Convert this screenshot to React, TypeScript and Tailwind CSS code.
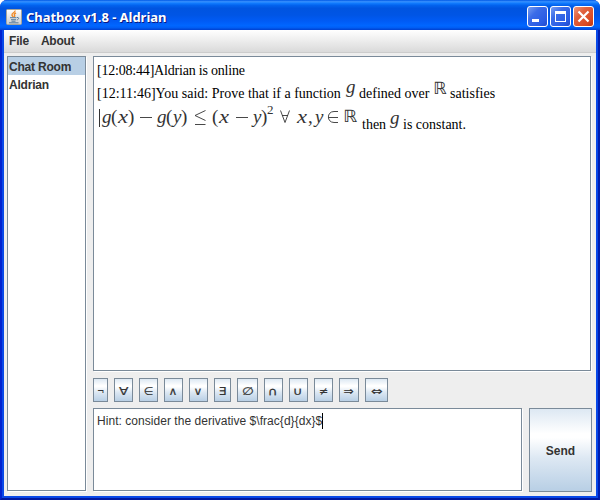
import React from "react";

const symbols = [
  { s: "¬", w: "w-[15px]", fit: "scale-x-75" },
  { s: "∀", w: "w-[19px]", fit: "scale-x-125" },
  { s: "∈", w: "w-[19px]", fit: "scale-x-100" },
  { s: "∧", w: "w-[19px]", fit: "scale-x-110" },
  { s: "∨", w: "w-[19px]", fit: "scale-x-110" },
  { s: "∃", w: "w-[17px]", fit: "scale-x-110" },
  { s: "∅", w: "w-[21px]", fit: "scale-x-125" },
  { s: "∩", w: "w-[19px]", fit: "scale-x-125" },
  { s: "∪", w: "w-[19px]", fit: "scale-x-125" },
  { s: "≠", w: "w-[19px]", fit: "scale-x-100" },
  { s: "⇒", w: "w-[20px]", fit: "scale-x-110" },
  { s: "⇔", w: "w-[23px]", fit: "scale-x-125" },
];

const metal =
  "border border-[#7a8a99] bg-[linear-gradient(to_bottom,#dde8f3_0%,#ffffff_30%,#ffffff_35%,#dde8f3_60%,#b8cfe5_100%)]";
const panel = "border border-[#7a8a99] bg-white shadow-[1px_1px_0_#ffffff]";

function JavaIcon() {
  return (
    <svg width="16" height="16" viewBox="0 0 16 16" className="block">
      <defs>
        <linearGradient id="cupbg" x1="0" y1="0" x2="0" y2="1">
          <stop offset="0" stopColor="#ffffff" />
          <stop offset="1" stopColor="#c9cccf" />
        </linearGradient>
      </defs>
      <rect x="0.5" y="0.5" width="15" height="15" rx="1" fill="url(#cupbg)" stroke="#a5a49b" />
      <path d="M9 1.5C9.5 3.5 5.5 4 6 6C6.2 7 7 7.3 7 8M10 4C8 5 8 5.500 8.700 6.500C9 7.200 8.500 7.600 8 8" fill="none" stroke="#f08a28" strokeWidth="1.4" />
      <path d="M4 8.700H10.500M5 10.700H10M5.500 12.200H9.500M3 13.800H12.500M11 8.500C13.500 8 13 10.500 10.800 11" fill="none" stroke="#587b9c" strokeWidth="1" />
    </svg>
  );
}

function WindowButton({ kind }: { kind: "min" | "max" | "close" }) {
  const close = kind === "close";
  return (
    <svg width="21" height="21" viewBox="0 0 21 21" className="block">
      <defs>
        <linearGradient id={"wb" + kind} x1="0" y1="0" x2="1" y2="1">
          <stop offset="0" stopColor={close ? "#f09a80" : "#7ca1f2"} />
          <stop offset="0.35" stopColor={close ? "#e0623f" : "#3b6ce8"} />
          <stop offset="0.75" stopColor={close ? "#da4a22" : "#2a5ce4"} />
          <stop offset="1" stopColor={close ? "#b83410" : "#2148c8"} />
        </linearGradient>
      </defs>
      <rect x="0.5" y="0.5" width="20" height="20" rx="2.5" fill={`url(#wb${kind})`} stroke="#ffffff" />
      {kind === "min" && <rect x="5" y="13" width="7" height="3" fill="#fff" />}
      {kind === "max" && (
        <path d="M5 5H16V16H5ZM6 8V15H15V8Z" fill="#fff" fillRule="evenodd" />
      )}
      {close && <path d="M5.5 5.5L15.5 15.5M15.5 5.5L5.5 15.5" stroke="#fff" strokeWidth="2.2" />}
    </svg>
  );
}

function MathG() {
  return (
    <span className="inline-block w-[10px] font-['Liberation_Serif',serif] text-[19px] leading-[16px] italic text-[#333]">
      g
    </span>
  );
}

function Formula() {
  return (
    <svg width="262" height="27" viewBox="97 101 262 27" className="block shrink-0" fill="#333" fontFamily="'Liberation Serif', serif" fontSize="19">
      <rect x="99" y="108" width="1" height="18" />
      <g fontStyle="italic">
        <text x="102" y="122">g</text>
        <text x="118" y="122" textLength="10" lengthAdjust="spacingAndGlyphs">x</text>
        <text x="157" y="122">g</text>
        <text x="173" y="122">y</text>
        <text x="219" y="122" textLength="10" lengthAdjust="spacingAndGlyphs">x</text>
        <text x="253" y="122">y</text>
        <text x="297" y="122" textLength="10" lengthAdjust="spacingAndGlyphs">x</text>
        <text x="315" y="122">y</text>
      </g>
      <text x="111" y="122">(</text>
      <text x="128" y="122">)</text>
      <text x="166" y="122">(</text>
      <text x="181" y="122">)</text>
      <text x="212" y="122">(</text>
      <text x="261" y="122">)</text>
      <text x="267" y="113" fontSize="13">2</text>
      <text x="308" y="122">,</text>
      <path d="M140 116.5H152M236 116.5H248M195 123.500H205.500M205.500 109.500L195 114.500L205.500 119.500" fill="none" stroke="#333" strokeWidth="0.9" />
      <path d="M280.500 109.500L285 121.500L289.500 109.500M282 114.500H288" fill="none" stroke="#333" strokeWidth="0.9" />
      <path d="M338 110.500H334C326.500 110.500 326.500 121.500 334 121.500H338M328.500 116.500H338" fill="none" stroke="#333" strokeWidth="0.9" />
      <text x="343" y="121" fontFamily="'DejaVu Sans', sans-serif" fontSize="17" textLength="14" lengthAdjust="spacingAndGlyphs">ℝ</text>
    </svg>
  );
}

export default function App() {
  return (
    <div className="flex h-[500px] w-[600px] flex-col overflow-hidden bg-white font-['Liberation_Sans',Arial,sans-serif] text-[#333]">
      <div className="flex h-full flex-col rounded-t-[7px] border-x-2 border-b-2 border-r-[#001eb0] border-b-[#0018a0] border-l-[#0022d0] bg-[#0848e8] px-[2px] pb-[2px]">
        <header className="-mx-1 flex h-[30px] shrink-0 items-center rounded-t-[7px] bg-[linear-gradient(to_bottom,#0058e6_0%,#3a93ff_6%,#127dff_10%,#0262ee_18%,#0054e0_28%,#0055e5_50%,#005bf5_70%,#0066ff_85%,#005ef5_92%,#0040cf_100%)] pt-[3px] pr-[6px] pl-[6px]">
          <JavaIcon />
          <h1 className="ml-1 flex-1 whitespace-nowrap pt-px font-['Noto_Sans',sans-serif] text-[13px] font-bold leading-4 tracking-[-0.03px] text-white [text-shadow:1px_1px_0_#0a1883]">
            Chatbox v1.8 - Aldrian
          </h1>
          <div className="flex gap-[2px]">
            <WindowButton kind="min" />
            <WindowButton kind="max" />
            <WindowButton kind="close" />
          </div>
        </header>
        <nav className="flex h-[23px] shrink-0 items-center gap-[12px] border-b border-[#ccc] bg-gradient-to-b from-white to-[#dadada] pl-[5px] text-[12px] font-bold tracking-[-0.2px]">
          <span>File</span>
          <span>About</span>
        </nav>
        <main className="flex min-h-0 flex-1 gap-[7px] bg-[#eee] pt-[3px] pr-1 pb-[5px] pl-[3px]">
          <aside className={`${panel} w-[79px] shrink-0 text-[12px] font-bold leading-[18px] tracking-[-0.2px]`}>
            <div className="h-[18px] whitespace-nowrap bg-[#b8cfe5] pl-px pt-px">Chat Room</div>
            <div className="h-[18px] pl-px pt-px">Aldrian</div>
          </aside>
          <section className="flex min-w-0 flex-1 flex-col">
            <div className={`${panel} mr-px h-[315px] shrink-0 overflow-hidden pl-[3px] pt-[6px] font-['Liberation_Serif',serif] text-[14px] text-black`}>
              <p className="h-[17px] whitespace-nowrap leading-4 tracking-[-0.2px]">[12:08:44]Aldrian is online</p>
              <div className="flex h-[22px] items-end whitespace-nowrap leading-4">
                <span className="w-[248px]">[12:11:46]You said: Prove that if a function</span>
                <span className="mb-[7px] ml-px flex w-[13px]"><MathG /></span>
                <span className="w-[73px]">defined over</span>
                <span className="mb-[6px] w-[18px] pl-px font-['DejaVu_Sans',sans-serif] text-[17px] text-[#333]">ℝ</span>
                <span>satisfies</span>
              </div>
              <div className="flex h-[31px] items-end whitespace-nowrap leading-4">
                <span className="mb-[4px]"><Formula /></span>
                <span className="ml-[3px] w-[27px]">then</span>
                <span className="mb-[7px] ml-px flex w-[13px]"><MathG /></span>
                <span>is constant.</span>
              </div>
            </div>
            <div className="mt-[7px] flex h-[24px] shrink-0 gap-[6px]">
              {symbols.map(({ s, w, fit }) => (
                <button key={s} className={`${metal} ${w} flex shrink-0 items-center justify-center pt-[2px] font-['DejaVu_Sans',sans-serif] text-[11px] leading-none`}>
                  <span className={`${fit} [-webkit-text-stroke:0.2px_#333]`}>{s}</span>
                </button>
              ))}
            </div>
            <div className="mt-[6px] flex min-h-0 flex-1 gap-[7px]">
              <div className={`${panel} flex w-[429px] items-start whitespace-pre pl-[3px] pt-[3px] text-[12px] leading-[18px] tracking-[0.04px]`}>
                Hint: consider the derivative $\frac&#123;d&#125;&#123;dx&#125;$
                <i className="mt-px h-4 w-px bg-black" />
              </div>
              <button className={`${metal} -mb-px w-[63px] pt-[2px] text-[12px] font-bold`}>Send</button>
            </div>
          </section>
        </main>
      </div>
    </div>
  );
}
